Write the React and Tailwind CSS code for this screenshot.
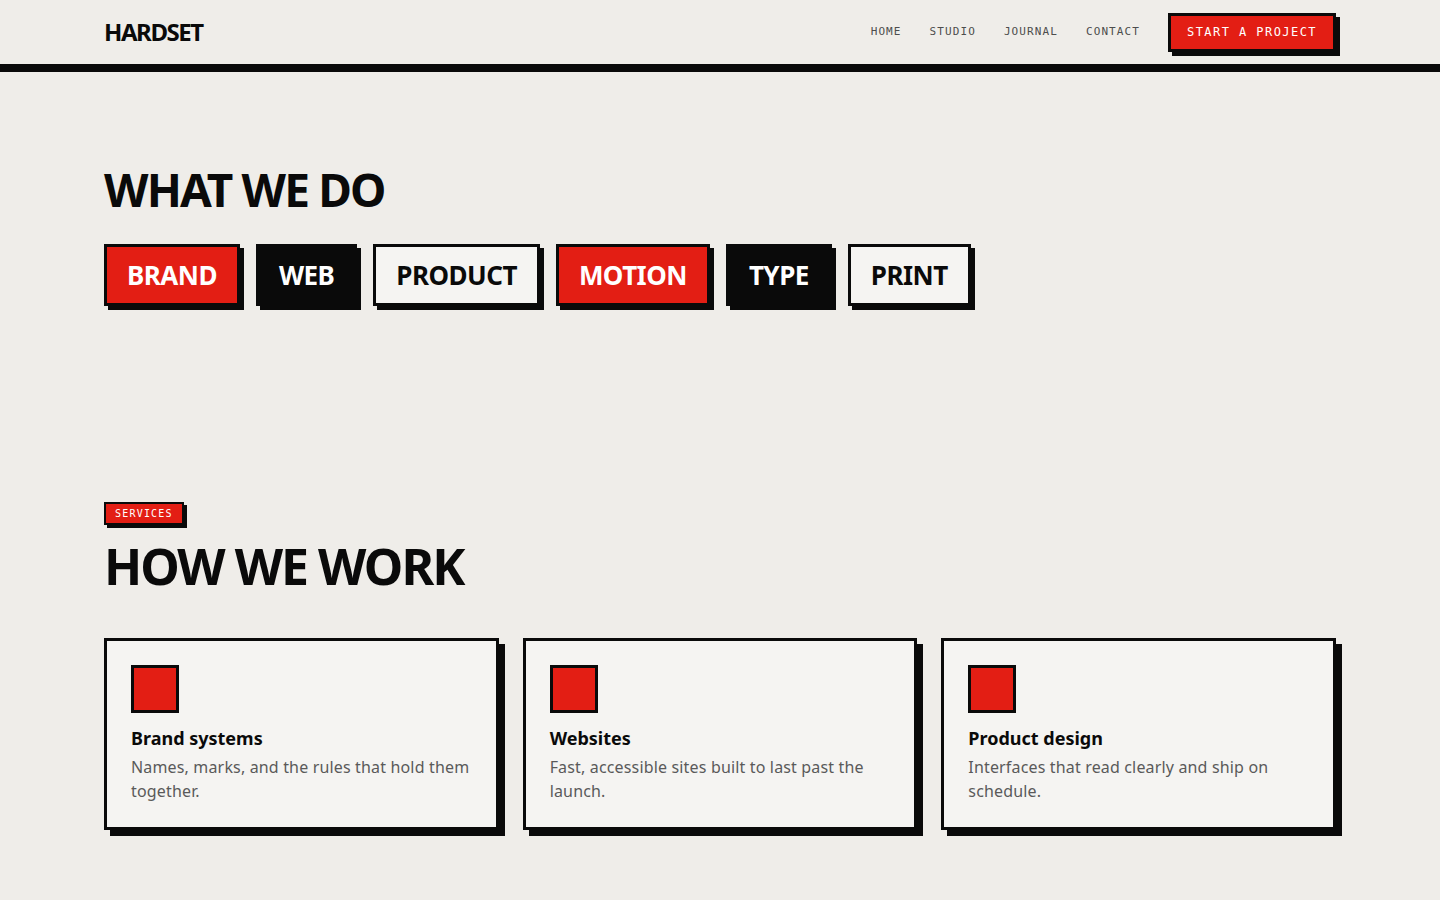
import React from 'react';

const navLinks = ['HOME', 'STUDIO', 'JOURNAL', 'CONTACT'];

const tags = [
  { label: 'BRAND', style: 'bg-[#e31e14] text-white' },
  { label: 'WEB', style: 'bg-[#0a0a0a] text-white' },
  { label: 'PRODUCT', style: 'bg-[#f5f4f2] text-[#0a0a0a]' },
  { label: 'MOTION', style: 'bg-[#e31e14] text-white' },
  { label: 'TYPE', style: 'bg-[#0a0a0a] text-white' },
  { label: 'PRINT', style: 'bg-[#f5f4f2] text-[#0a0a0a]' },
];

const services = [
  { title: 'Brand systems', body: 'Names, marks, and the rules that hold them together.' },
  { title: 'Websites', body: 'Fast, accessible sites built to last past the launch.' },
  { title: 'Product design', body: 'Interfaces that read clearly and ship on schedule.' },
];

function Header() {
  return (
    <header className="h-[72px] border-b-8 border-[#0a0a0a] bg-[#efede9]">
      <div className="mx-auto flex h-16 w-[1232px] items-center justify-between">
        <a href="#" className="text-[24px] font-bold tracking-[-0.06em] text-[#0a0a0a]">HARDSET</a>
        <nav className="flex items-center">
          <div className="flex items-center gap-[28px] font-['DejaVu_Sans_Mono',monospace] text-[11px] tracking-[0.1em] text-[#4d4d4d]">
            {navLinks.map((link) => (
              <a key={link} href="#">{link}</a>
            ))}
          </div>
          <button className="ml-[28px] border-[3px] border-[#0a0a0a] bg-[#e31e14] px-4 py-[9px] font-['DejaVu_Sans_Mono',monospace] text-[12px] leading-[15px] tracking-[0.12em] text-white shadow-[4px_4px_0_#0a0a0a]">
            START A PROJECT
          </button>
        </nav>
      </div>
    </header>
  );
}

function Capabilities() {
  return (
    <section className="mx-auto w-[1232px] pt-[94px] pb-[196px]">
      <h2 className="text-[46px] font-bold leading-none tracking-[-0.04em] text-[#0a0a0a]">WHAT WE DO</h2>
      <div className="mt-8 flex gap-4">
        {tags.map((tag) => (
          <span
            key={tag.label}
            className={`border-[3px] border-[#0a0a0a] px-5 py-[13px] text-[26px] font-bold leading-[30px] tracking-[-0.02em] shadow-[4px_4px_0_#0a0a0a] ${tag.style}`}
          >
            {tag.label}
          </span>
        ))}
      </div>
    </section>
  );
}

function Services() {
  return (
    <section className="mx-auto w-[1232px] pb-16">
      <div className="w-fit border-2 border-[#0a0a0a] bg-[#e31e14] px-[9px] py-[2px] font-['DejaVu_Sans_Mono',monospace] text-[10px] leading-[15px] tracking-[0.12em] text-white shadow-[3px_3px_0_#0a0a0a]">
        SERVICES
      </div>
      <h2 className="mt-4 text-[50px] font-bold leading-none tracking-[-0.04em] text-[#0a0a0a]">HOW WE WORK</h2>

      <div className="mt-[47px] grid grid-cols-3 gap-6">
        {services.map((s) => (
          <div key={s.title} className="border-[3px] border-[#0a0a0a] bg-[#f5f4f2] p-6 shadow-[6px_6px_0_#0a0a0a]">
            <div className="h-12 w-12 border-[3px] border-[#0a0a0a] bg-[#e31e14]" />
            <h3 className="mt-3 text-[18px] font-bold leading-[26px] text-[#0a0a0a]">{s.title}</h3>
            <p className="mt-1 text-[16px] leading-6 tracking-[0.01em] text-[#5a5a5a]">{s.body}</p>
          </div>
        ))}
      </div>
    </section>
  );
}

export default function App() {
  return (
    <div className="min-h-screen bg-[#efede9] font-['Noto_Sans',sans-serif]">
      <Header />
      <Capabilities />
      <Services />
    </div>
  );
}
